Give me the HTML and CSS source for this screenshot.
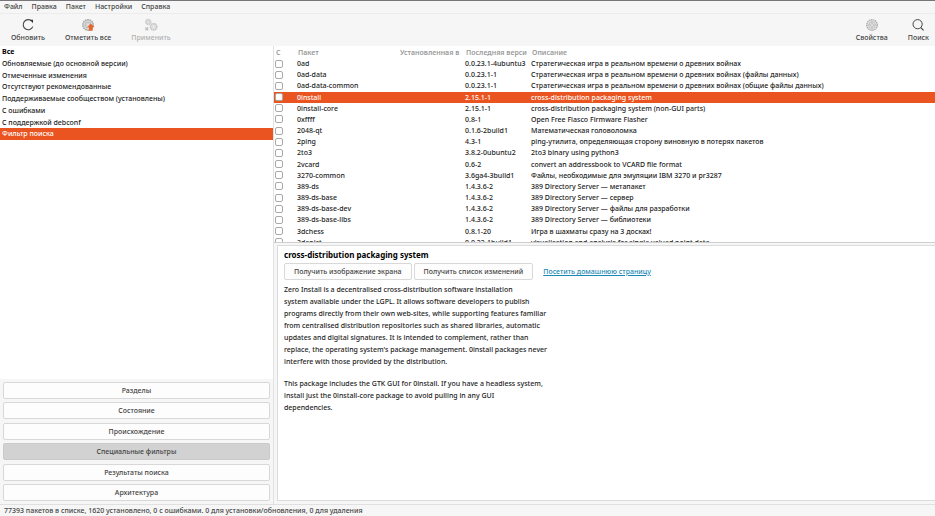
FILE: index.html
```html
<!DOCTYPE html>
<html lang="ru">
<head>
<meta charset="utf-8">
<title>Synaptic</title>
<link rel="stylesheet" href="styles.css">
</head>
<body>
<nav class="menubar">
  <a href="#">Файл</a><a href="#">Правка</a><a href="#">Пакет</a><a href="#">Настройки</a><a href="#">Справка</a>
</nav>
<header class="toolbar">
  <button class="tool" type="button">
    <svg viewBox="0 0 14 14" fill="none"><path d="M10.8 3.2A5 5 0 1 0 11.8 8.6" stroke="#444" stroke-width="1.1"/><path d="M8.4 1.8H12V5.2L10.6 3.4Z" fill="#333"/></svg>
    <span>Обновить</span>
  </button>
  <button class="tool" type="button">
    <svg viewBox="0 0 14 14" fill="none"><circle cx="7" cy="7" r="5.2" fill="#ddd" stroke="#aaa" stroke-width="1.6" stroke-dasharray="1.7 .6"/><circle cx="7" cy="7" r="3" stroke="#bbb"/><circle cx="7" cy="7" r="1.3" fill="#fff" stroke="#aaa" stroke-width=".6"/><path d="M9.8 5.4L13.4 9.2H11.7V12.7H8V9.2H6.2Z" fill="#e9662c"/></svg>
    <span>Отметить все</span>
  </button>
  <button class="tool" type="button" disabled>
    <svg viewBox="0 0 14 14" fill="none"><circle cx="4.2" cy="4" r="2.5" fill="#ddd" stroke="#ccc" stroke-width="1.5" stroke-dasharray="1.5 .4"/><circle cx="9.6" cy="8.8" r="3.2" fill="#e6e6e6" stroke="#c6c6c6" stroke-width="1.6" stroke-dasharray="1.6 .4"/><circle cx="9.6" cy="8.8" r="1.2" fill="#f7f7f7" stroke="#ccc" stroke-width=".6"/><path d="M1.4 9.4L4.2 12.2M4.2 9.4L1.4 12.2" stroke="#bbb" stroke-width="1.3"/></svg>
    <span>Применить</span>
  </button>
  <button class="tool tool-end" type="button">
    <svg viewBox="0 0 14 14" fill="none"><circle cx="7" cy="7" r="5.3" fill="#e4e4e4" stroke="#aaa" stroke-width="1.2" stroke-dasharray="1.6 .5"/><circle cx="7" cy="7" r="3.3" stroke="#bbb" stroke-width=".8"/><circle cx="7" cy="7" r="1.4" fill="#f7f7f7" stroke="#aaa" stroke-width=".7"/><path d="M7 2.5V5.4M7 8.6V11.5M2.5 7H5.4M8.6 7H11.5" stroke="#bbb" stroke-width=".6"/></svg>
    <span>Свойства</span>
  </button>
  <button class="tool" type="button">
    <svg viewBox="0 0 14 14" fill="none" stroke="#444"><circle cx="6.6" cy="6.2" r="4.6"/><path d="M9.8 9.6L12.6 12.4" stroke-width="1.2"/></svg>
    <span>Поиск</span>
  </button>
</header>
<main class="workspace">
  <aside class="sidebar">
    <ul class="filters">
      <li class="all">Все</li>
      <li>Обновляемые (до основной версии)</li>
      <li>Отмеченные изменения</li>
      <li>Отсутствуют рекомендованные</li>
      <li>Поддерживаемые сообществом (установлены)</li>
      <li>С ошибками</li>
      <li>С поддержкой debconf</li>
      <li class="selected">Фильтр поиска</li>
    </ul>
    <div class="views">
      <button type="button">Разделы</button>
      <button type="button">Состояние</button>
      <button type="button">Происхождение</button>
      <button type="button" class="active">Специальные фильтры</button>
      <button type="button">Результаты поиска</button>
      <button type="button">Архитектура</button>
    </div>
  </aside>
  <section class="content">
    <div class="packages">
      <table>
        <colgroup><col class="c-state"><col class="c-name"><col class="c-inst"><col class="c-last"><col></colgroup>
        <thead><tr><th>С</th><th>Пакет</th><th>Установленная в</th><th>Последняя верси</th><th>Описание</th></tr></thead>
        <tbody>
          <tr><td><input type="checkbox" aria-label="0ad"></td><td>0ad</td><td></td><td>0.0.23.1-4ubuntu3</td><td>Стратегическая игра в реальном времени о древних войнах</td></tr>
          <tr><td><input type="checkbox" aria-label="0ad-data"></td><td>0ad-data</td><td></td><td>0.0.23.1-1</td><td>Стратегическая игра в реальном времени о древних войнах (файлы данных)</td></tr>
          <tr><td><input type="checkbox" aria-label="0ad-data-common"></td><td>0ad-data-common</td><td></td><td>0.0.23.1-1</td><td>Стратегическая игра в реальном времени о древних войнах (общие файлы данных)</td></tr>
          <tr class="selected"><td><input type="checkbox" aria-label="0install"></td><td>0install</td><td></td><td>2.15.1-1</td><td>cross-distribution packaging system</td></tr>
          <tr><td><input type="checkbox" aria-label="0install-core"></td><td>0install-core</td><td></td><td>2.15.1-1</td><td>cross-distribution packaging system (non-GUI parts)</td></tr>
          <tr><td><input type="checkbox" aria-label="0xffff"></td><td>0xffff</td><td></td><td>0.8-1</td><td>Open Free Fiasco Firmware Flasher</td></tr>
          <tr><td><input type="checkbox" aria-label="2048-qt"></td><td>2048-qt</td><td></td><td>0.1.6-2build1</td><td>Математическая головоломка</td></tr>
          <tr><td><input type="checkbox" aria-label="2ping"></td><td>2ping</td><td></td><td>4.3-1</td><td>ping-утилита, определяющая сторону виновную в потерях пакетов</td></tr>
          <tr><td><input type="checkbox" aria-label="2to3"></td><td>2to3</td><td></td><td>3.8.2-0ubuntu2</td><td>2to3 binary using python3</td></tr>
          <tr><td><input type="checkbox" aria-label="2vcard"></td><td>2vcard</td><td></td><td>0.6-2</td><td>convert an addressbook to VCARD file format</td></tr>
          <tr><td><input type="checkbox" aria-label="3270-common"></td><td>3270-common</td><td></td><td>3.6ga4-3build1</td><td>Файлы, необходимые для эмуляции IBM 3270 и pr3287</td></tr>
          <tr><td><input type="checkbox" aria-label="389-ds"></td><td>389-ds</td><td></td><td>1.4.3.6-2</td><td>389 Directory Server — метапакет</td></tr>
          <tr><td><input type="checkbox" aria-label="389-ds-base"></td><td>389-ds-base</td><td></td><td>1.4.3.6-2</td><td>389 Directory Server — сервер</td></tr>
          <tr><td><input type="checkbox" aria-label="389-ds-base-dev"></td><td>389-ds-base-dev</td><td></td><td>1.4.3.6-2</td><td>389 Directory Server — файлы для разработки</td></tr>
          <tr><td><input type="checkbox" aria-label="389-ds-base-libs"></td><td>389-ds-base-libs</td><td></td><td>1.4.3.6-2</td><td>389 Directory Server — библиотеки</td></tr>
          <tr><td><input type="checkbox" aria-label="3dchess"></td><td>3dchess</td><td></td><td>0.8.1-20</td><td>Игра в шахматы сразу на 3 досках!</td></tr>
          <tr><td><input type="checkbox" aria-label="3depict"></td><td>3depict</td><td></td><td>0.0.22-1build1</td><td>visualisation and analysis for single valued point data</td></tr>
        </tbody>
      </table>
    </div>
    <article class="details">
      <h1>cross-distribution packaging system</h1>
      <div class="actions">
        <button type="button">Получить изображение экрана</button>
        <button type="button">Получить список изменений</button>
        <a href="#">Посетить домашнюю страницу</a>
      </div>
      <p>Zero Install is a decentralised cross-distribution software installation<br>system available under the LGPL. It allows software developers to publish<br>programs directly from their own web-sites, while supporting features familiar<br>from centralised distribution repositories such as shared libraries, automatic<br>updates and digital signatures. It is intended to complement, rather than<br>replace, the operating system's package management. 0install packages never<br>interfere with those provided by the distribution.</p>
      <p>This package includes the GTK GUI for 0install. If you have a headless system,<br>install just the 0install-core package to avoid pulling in any GUI<br>dependencies.</p>
    </article>
  </section>
</main>
<footer class="status">77393 пакетов в списке, 1620 установлено, 0 с ошибками. 0 для установки/обновления, 0 для удаления</footer>
</body>
</html>
```
FILE: styles.css
```css
* { box-sizing: border-box; }
body {
  margin: 0;
  height: 100vh;
  display: flex;
  flex-direction: column;
  overflow: hidden;
  border-top: 1px solid #77757a;
  background: #f6f6f6;
  color: #222;
  font: 500 7px/11px "Noto Sans", "Open Sans", sans-serif;
}
button { font: inherit; color: #444; cursor: pointer; }
.menubar {
  display: flex;
  gap: 9px;
  padding: 0 4px;
  border-bottom: 1px solid #ececec;
}
.menubar a { color: #444; text-decoration: none; line-height: 12px; }
.toolbar { display: flex; gap: 20px; padding: 4px 6px 3px 11px; height: 32px; }
.tool {
  display: flex;
  flex-direction: column;
  align-items: center;
  padding: 0;
  border: 0;
  background: none;
}
.tool svg { width: 14px; height: 14px; }
.tool:disabled { color: #b0b0b0; }
.tool-end { margin-left: auto; }
.workspace { flex: 1; min-height: 0; display: flex; }
.sidebar { flex: 0 0 273px; display: flex; flex-direction: column; background: #fff; }
.filters {
  height: 94px;
  margin: 0 0 auto;
  padding: 0;
  list-style: none;
  display: grid;
  grid-auto-rows: 1fr;
}
.filters li { padding-left: 2px; }
.filters .all { font-weight: bold; color: #000; }
.selected { background: #e95420; color: #fff; }
.views {
  height: 125px;
  display: grid;
  align-content: space-between;
  padding: 3px;
  background: #f6f6f6;
}
.views button, .actions button {
  height: 17px;
  padding: 0 8px;
  border: 1px solid #d8d8d8;
  border-radius: 2px;
  background: #fdfdfd;
  line-height: 15px;
}
.views .active { background: #d2d2d2; border-color: #cacaca; }
.content {
  flex: 1;
  min-width: 0;
  display: flex;
  flex-direction: column;
  border-left: 1px solid #e2e2e2;
}
.packages {
  flex: 0 0 197px;
  overflow: hidden;
  background: #fff;
  border-bottom: 1px solid #cfcfcf;
}
table { width: 100%; height: 202px; table-layout: fixed; border-collapse: collapse; }
.c-state { width: 22px; }
.c-name { width: 102px; }
.c-inst { width: 66px; }
.c-last { width: 66px; }
th, td {
  padding: 0 0 0 1px;
  text-align: left;
  white-space: nowrap;
  overflow: hidden;
  vertical-align: middle;
}
thead tr { height: 12px; }
th { font-weight: 600; color: #999; padding: 0 0 0 2px; }
td input {
  appearance: none;
  display: block;
  width: 8px;
  height: 8px;
  margin: 0;
  border: 1px solid #a9a9a9;
  border-radius: 2px;
  background: #fff;
}
.details {
  flex: 1;
  margin: 2px 0 3px 3px;
  padding: 3px 6px;
  background: #fff;
  border: 1px solid #dcdcdc;
  border-right: 0;
}
h1 { margin: 0; font-size: 8px; line-height: 12px; color: #000; }
.actions { display: flex; gap: 2px; align-items: center; margin: 2px 0 4px; }
.actions button { padding: 0 9px; }
.actions a { margin-left: 8px; color: #1b88b4; }
.details p { margin: 0 0 10px; line-height: 12px; }
.status { border-top: 1px solid #e0e0e0; padding-left: 4px; line-height: 11px; color: #444; }
```
